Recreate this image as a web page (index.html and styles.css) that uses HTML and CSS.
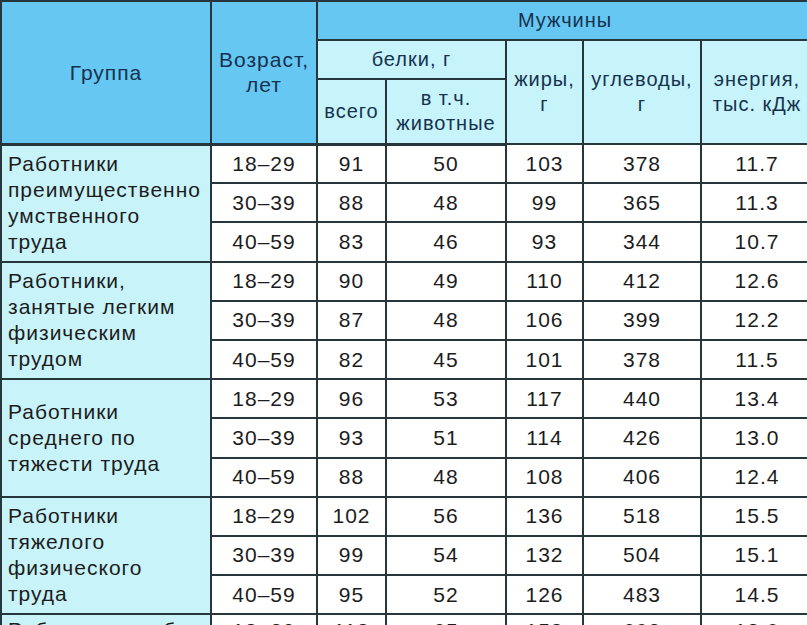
FILE: index.html
```html
<!DOCTYPE html>
<html lang="ru">
<head>
<meta charset="utf-8">
<title>Нормы питания</title>
<link rel="stylesheet" href="styles.css">
</head>
<body>
<table class="norms">
  <colgroup>
    <col class="c-group"><col class="c-age"><col class="c-total"><col class="c-animal"><col class="c-fat"><col class="c-carb"><col class="c-energy">
  </colgroup>
  <thead>
    <tr class="h1">
      <th class="dark big" rowspan="3">Группа</th>
      <th class="dark big" rowspan="3">Возраст,<br>лет</th>
      <th class="dark" colspan="5">Мужчины</th>
    </tr>
    <tr class="h2">
      <th class="light" colspan="2">белки, г</th>
      <th class="light" rowspan="2">жиры,<br>г</th>
      <th class="light" rowspan="2">углеводы,<br>г</th>
      <th class="light" rowspan="2">энергия,<br>тыс. кДж</th>
    </tr>
    <tr class="h3">
      <th class="light">всего</th>
      <th class="light">в т.ч.<br>животные</th>
    </tr>
  </thead>
  <tbody>
    <tr><td class="grp" rowspan="3">Работники<br>преимущественно<br>умственного<br>труда</td><td>18–29</td><td>91</td><td>50</td><td>103</td><td>378</td><td>11.7</td></tr>
    <tr><td>30–39</td><td>88</td><td>48</td><td>99</td><td>365</td><td>11.3</td></tr>
    <tr><td>40–59</td><td>83</td><td>46</td><td>93</td><td>344</td><td>10.7</td></tr>
    <tr><td class="grp" rowspan="3">Работники,<br>занятые легким<br>физическим<br>трудом</td><td>18–29</td><td>90</td><td>49</td><td>110</td><td>412</td><td>12.6</td></tr>
    <tr><td>30–39</td><td>87</td><td>48</td><td>106</td><td>399</td><td>12.2</td></tr>
    <tr><td>40–59</td><td>82</td><td>45</td><td>101</td><td>378</td><td>11.5</td></tr>
    <tr><td class="grp" rowspan="3">Работники<br>среднего по<br>тяжести труда</td><td>18–29</td><td>96</td><td>53</td><td>117</td><td>440</td><td>13.4</td></tr>
    <tr><td>30–39</td><td>93</td><td>51</td><td>114</td><td>426</td><td>13.0</td></tr>
    <tr><td>40–59</td><td>88</td><td>48</td><td>108</td><td>406</td><td>12.4</td></tr>
    <tr><td class="grp" rowspan="3">Работники<br>тяжелого<br>физического<br>труда</td><td>18–29</td><td>102</td><td>56</td><td>136</td><td>518</td><td>15.5</td></tr>
    <tr><td>30–39</td><td>99</td><td>54</td><td>132</td><td>504</td><td>15.1</td></tr>
    <tr><td>40–59</td><td>95</td><td>52</td><td>126</td><td>483</td><td>14.5</td></tr>
    <tr class="tail"><td class="grp" rowspan="3">Работники особо<br>тяжелого<br>физического<br>труда</td><td>18–29</td><td>118</td><td>65</td><td>158</td><td>602</td><td>18.0</td></tr>
    <tr><td>30–39</td><td>113</td><td>62</td><td>150</td><td>574</td><td>17.2</td></tr>
    <tr><td>40–59</td><td>106</td><td>58</td><td>143</td><td>543</td><td>16.3</td></tr>
  </tbody>
</table>
</body>
</html>
```

FILE: styles.css
```css
html, body {
  margin: 0;
  padding: 0;
  background: #ffffff;
  overflow: hidden;
}

.norms {
  border-collapse: collapse;
  table-layout: fixed;
  width: 812px;
  font-family: "Liberation Sans", Arial, sans-serif;
  letter-spacing: 1px;
  color: #1c1c1c;
}

.c-group { width: 210px; }
.c-age { width: 106px; }
.c-total { width: 69px; }
.c-animal { width: 120px; }
.c-fat { width: 77px; }
.c-carb { width: 118px; }
.c-energy { width: 112px; }

.norms th,
.norms td {
  border: 2px solid #26363c;
  padding: 0;
  text-align: center;
  vertical-align: middle;
}

.norms th {
  font-weight: normal;
  font-size: 20px;
  line-height: 25px;
  color: #15324e;
}

.norms th.big {
  font-size: 21px;
}

.norms th.dark {
  background: #66c7f3;
}

.norms th.light {
  background: #c7f3fa;
}

.h1 { height: 39px; }
.h2 { height: 39px; }
.h3 { height: 65px; }

.norms thead tr:last-child th,
.norms thead th[rowspan="3"] {
  border-bottom-width: 3px;
}

.norms tbody tr {
  height: 39.2px;
}

.norms td {
  font-size: 21px;
  line-height: 26px;
  background: #ffffff;
}

.norms td.grp {
  background: #c8f3f9;
  text-align: left;
  padding-left: 6px;
  white-space: nowrap;
}

.norms .tail td {
  vertical-align: top;
  padding-top: 3px;
}

.norms .tail td.grp {
  padding-top: 2px;
}
```
